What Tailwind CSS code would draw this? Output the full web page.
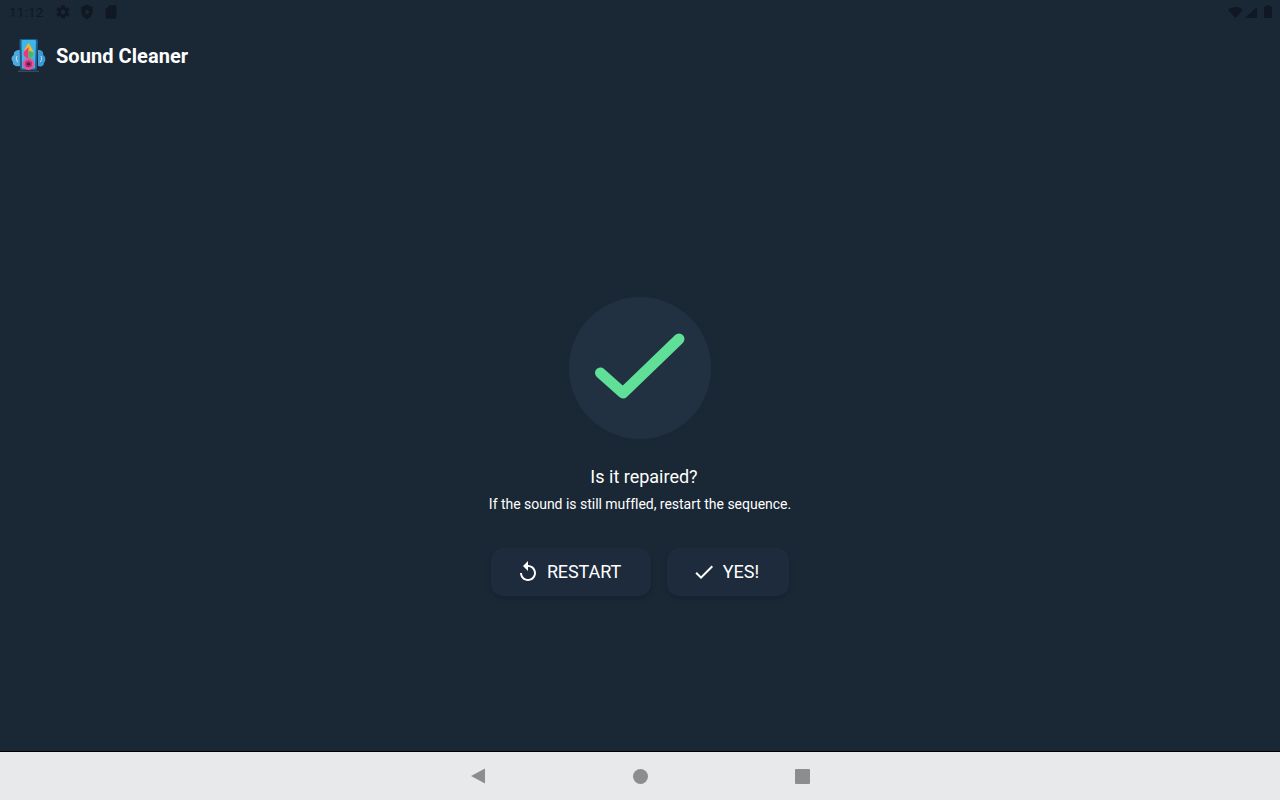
<!DOCTYPE html>
<html lang="en">
<head>
    <meta charset="UTF-8">
    <title>Sound Cleaner</title>
    <script src="https://cdn.jsdelivr.net/npm/@tailwindcss/browser@4"></script>
</head>
<body class="bg-[#1a2735] font-['Roboto',sans-serif] text-white">
    <div class="w-[1280px] h-[800px] flex flex-col overflow-hidden">
        <!-- Status bar -->
        <div class="h-6 flex items-center justify-between pl-[9px] pr-2 text-[#0f1823] shrink-0">
            <div class="flex items-center">
                <span class="w-[35px] text-[13.5px] tracking-[0.2px]">11:12</span>
                <svg class="w-4 h-4 ml-[11px]" viewBox="0 0 24 24" fill="currentColor"><path d="M19.4 13c.1-.3.1-.7.1-1s0-.7-.1-1l2.100-1.600c.2-.2.2-.4.1-.6l-2-3.500c-.1-.2-.4-.3-.6-.2l-2.500 1c-.5-.4-1.100-.7-1.700-1l-.4-2.600c0-.3-.2-.5-.5-.5h-4c-.3 0-.5.2-.5.4l-.4 2.700c-.6.2-1.100.6-1.700 1l-2.500-1c-.2-.1-.5 0-.6.2l-2 3.500c-.1.2-.1.5.1.6L4.500 11c0 .3-.1.7-.1 1s0 .7.1 1l-2.100 1.600c-.2.2-.2.4-.1.6l2 3.500c.1.2.4.3.6.2l2.500-1c.5.4 1.100.7 1.700 1l.4 2.600c0 .3.2.4.5.4h4c.3 0 .5-.2.5-.4l.4-2.600c.6-.3 1.200-.6 1.700-1l2.500 1c.2.1.5 0 .6-.2l2-3.500c.1-.2.1-.5-.1-.6L19.400 13zM12 15.500a3.500 3.500 0 1 1 0-7 3.500 3.500 0 0 1 0 7z"/></svg>
                <svg class="w-4 h-4 ml-2" viewBox="0 0 24 24" fill="currentColor"><path fill-rule="evenodd" d="M12 1 3.500 4.500v6.300c0 5.400 3.600 10.400 8.500 12.200 4.900-1.800 8.500-6.800 8.500-12.200V4.500L12 1zM10 7.500v9l6.500-4.500L10 7.500z"/></svg>
                <svg class="w-4 h-4 ml-2" viewBox="0 0 24 24" fill="currentColor"><path d="M18 2h-8L4 8v12c0 1.100.9 2 2 2h12c1.100 0 2-.9 2-2V4c0-1.100-.9-2-2-2z"/></svg>
            </div>
            <div class="flex items-center">
                <svg class="w-[15px] h-[11px]" viewBox="0 0 15 11" fill="currentColor"><path d="M7.500 11 0 2.800C2 1 4.600 0 7.500 0S13 1 15 2.800L7.500 11z"/></svg>
                <svg class="w-3 h-[11px] ml-[2px]" viewBox="0 0 12 11" fill="currentColor"><path d="M12 11V0L0 11h12z"/></svg>
                <svg class="w-2 h-[13px] ml-[7px] -mt-[1px]" viewBox="0 0 8 13" fill="currentColor"><path d="M2.500 0h3v1.500H7.300c.4 0 .7.300.7.700v10.100c0 .4-.3.7-.7.7H.7c-.4 0-.7-.3-.7-.7V2.200c0-.4.300-.7.700-.7h1.800z"/></svg>
            </div>
        </div>

        <!-- Toolbar -->
        <div class="h-16 flex items-center shrink-0">
            <svg class="w-9 h-9 ml-[10px]" viewBox="0 0 36 36">
                <!-- splashes -->
                <path d="M10 12C6 12 3 14 4 17c-3 1-3 5-1 7-1 3 3 5 7 4z" fill="#4fa9de"/>
                <path d="M28 12c4 0 6 2 5 5 3 1 3 6 1 8 0 3-3 4-6 3z" fill="#3d9ad4"/>
                <path d="M7 18c-1 2-1 5 1 6" stroke="#bfe6f7" stroke-width="1" fill="none"/>
                <path d="M31 18c1 2 1 5-1 6" stroke="#bfe6f7" stroke-width="1" fill="none"/>
                <!-- speaker body -->
                <path d="M11 1h15c1 0 2 1 2 2l-1 27c0 1-1 2-2 2H12c-1 0-2-1-2-2L9.500 3c0-1 .5-2 1.500-2z" fill="#1f5f8c"/>
                <path d="M12.500 2h12c1 0 1.500 .5 1.500 1.500L25 29c0 1-.5 1.500-1.500 1.500h-10c-1 0-1.500-.5-1.500-1.500L11.500 3.500c0-1 .2-1.500 1-1.500z" fill="#3fb6ea"/>
                <!-- rainbow drop -->
                <path d="M18.500 5c2.500 4 5 7 5 10.500a5 5 0 0 1-10 0C13.500 12 16 9 18.500 5z" fill="#f0b92c"/>
                <path d="M18.500 9c-2 2.500-5 4-5 6.500a5 5 0 0 0 5 5z" fill="#e8358f"/>
                <path d="M18.500 13c2 0 5 1 5 2.500a5 5 0 0 1-5 5z" fill="#3dbb6c"/>
                <!-- cone -->
                <circle cx="18.500" cy="26" r="6" fill="#e0559c"/>
                <circle cx="18.500" cy="26" r="3.500" fill="#b32c74"/>
                <circle cx="18.500" cy="26" r="1.500" fill="#4a1c3c"/>
                <path d="M8 32.500h21V34H8z" fill="#3a4859"/>
            </svg>
            <span class="ml-[10px] font-bold text-[20px] tracking-[0.05px]">Sound Cleaner</span>
        </div>

        <!-- Main -->
        <div class="flex-1 flex flex-col items-center pt-[209px]">
            <div class="w-[142px] h-[142px] rounded-full bg-[#223141] flex items-center justify-center">
                <svg class="w-[92px] h-[70px]" viewBox="0 0 92 70" fill="none">
                    <path d="M6.500 40 29 60 85 6" stroke="#5fdf98" stroke-width="11" stroke-linecap="round" stroke-linejoin="round"/>
                </svg>
            </div>
            <p class="mt-[26px] text-[18px] leading-[24px] ml-2">Is it repaired?</p>
            <p class="mt-[5px] text-sm leading-[20px] -tracking-[0.02px]">If the sound is still muffled, restart the sequence.</p>
            <div class="mt-[34px] flex gap-4">
                <button class="w-40 h-12 rounded-xl bg-[#1e2b3d] shadow-md flex items-center justify-center pr-[5px] text-[18px] tracking-[-0.1px]">
                    <svg class="w-6 h-6 mr-[7px]" viewBox="0 0 24 24" fill="currentColor"><path d="M12 5V1L7 6l5 5V7c3.310 0 6 2.690 6 6s-2.690 6-6 6-6-2.690-6-6H4c0 4.420 3.580 8 8 8s8-3.580 8-8-3.580-8-8-8z"/></svg>
                    <span class="mb-[2px]">RESTART</span>
                </button>
                <button class="w-[122px] h-12 rounded-xl bg-[#1e2b3d] shadow-md flex items-center justify-center pr-[5px] text-[18px]">
                    <svg class="w-6 h-6 mr-[7px]" viewBox="0 0 24 24" fill="currentColor"><path d="M9 16.170 4.830 12l-1.420 1.410L9 19 21 7l-1.410-1.410z"/></svg>
                    <span class="mb-[2px]">YES!</span>
                </button>
            </div>
        </div>

        <!-- Nav bar -->
        <div class="h-[49px] bg-[#e8e9eb] border-t border-black flex items-center justify-center shrink-0">
            <svg class="w-[14px] h-4 mr-[148px]" viewBox="0 0 15 16" fill="#8b8d8e"><path d="M15 0v16L0 8z"/></svg>
            <div class="w-[15px] h-[15px] rounded-full bg-[#8b8d8e]"></div>
            <div class="w-[15px] h-[15px] rounded-[1px] bg-[#8b8d8e] ml-[147px]"></div>
        </div>
    </div>
</body>
</html>
